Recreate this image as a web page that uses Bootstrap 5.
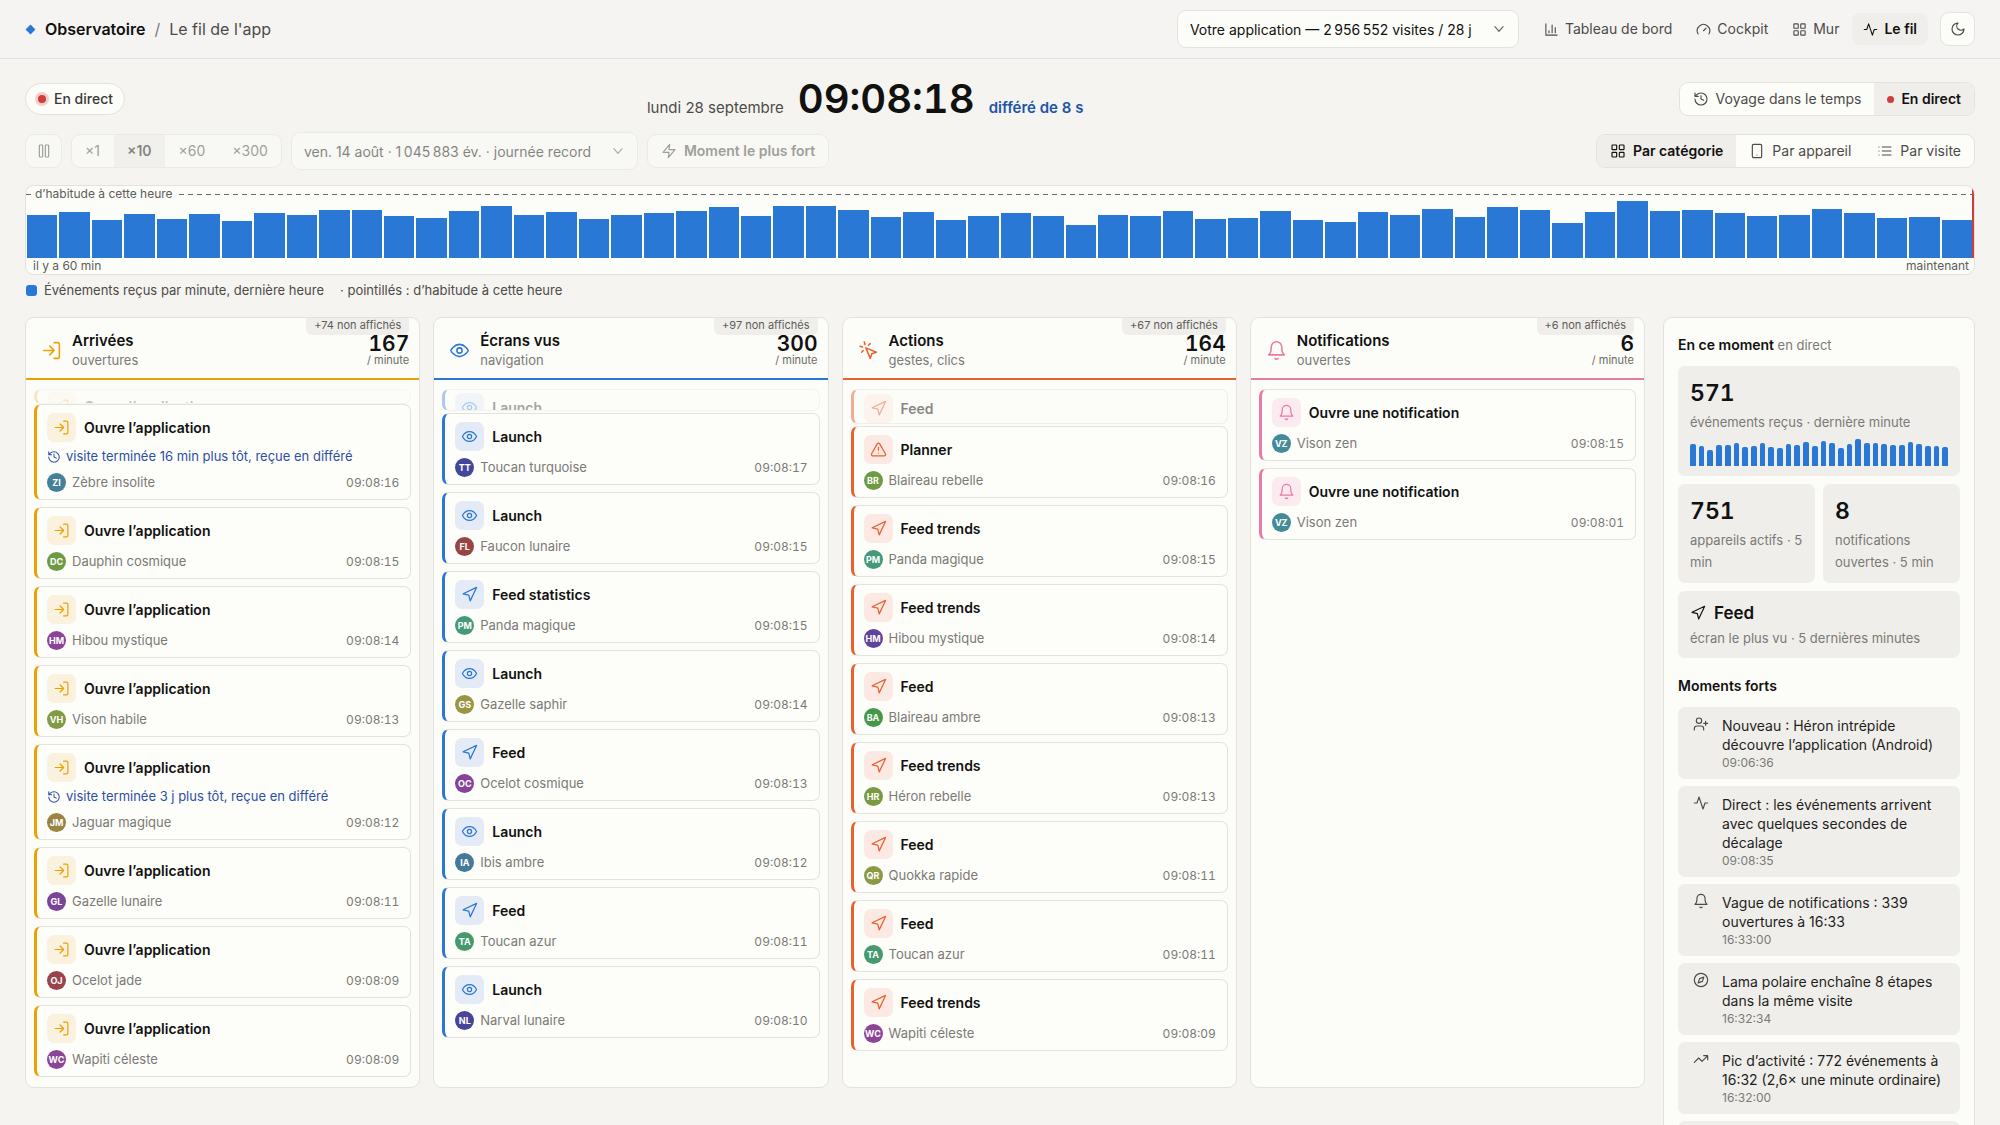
<!DOCTYPE html>
<html lang="fr">
<head>
<meta charset="utf-8">
<meta name="viewport" content="width=device-width, initial-scale=1">
<title>Observatoire / Le fil de l'app</title>
<link href="https://cdn.jsdelivr.net/npm/bootstrap@5.3.0/dist/css/bootstrap.min.css" rel="stylesheet">
<style>
:root{
  --page:#f5f4f0; --surface:#fcfcf9; --soft:#efeeeb; --line:#e3e2de;
  --ink:#111110; --ink2:#4c4b48; --ink3:#7b7a76; --blue:#2a78d6; --link:#1d54a8; --red:#d03b3b;
}
body{background:var(--page);color:var(--ink);font-family:Inter,"Liberation Sans",sans-serif;font-size:14px;line-height:20px}
.ic{width:16px;height:16px;flex:none;fill:none;stroke:currentColor;stroke-width:1.75;stroke-linecap:round;stroke-linejoin:round}
.ic-sm{width:14px;height:14px}
.ic-lg{width:21px;height:21px}
.num{font-variant-numeric:tabular-nums}
.gutter{padding-left:25px;padding-right:25px}

/* top bar */
.topbar{background:#f5f4f2;border-bottom:1px solid var(--line);height:59px}
.brand{font-size:16px;gap:9px}
.brand a{color:var(--ink);font-weight:600}
.brand-dot{width:7px;height:7px;margin:0 2px;background:var(--blue);transform:rotate(45deg)}
.brand-sep{color:var(--ink3)}
.brand-page{color:var(--ink2)}
.tabs{gap:2px;margin:0 12px 0 14px}
.tab-link{color:var(--ink2);padding:6px 11px;gap:6px;border-radius:8px}
.tab-link .ic{width:15px;height:15px}
.tab-link.active{background:var(--soft);color:var(--ink);font-weight:600}
.form-select.pick{
  --bs-form-select-bg-img:url("data:image/svg+xml,%3Csvg xmlns='http://www.w3.org/2000/svg' viewBox='0 0 24 24' fill='none' stroke='%23666' stroke-width='2' stroke-linecap='round' stroke-linejoin='round'%3E%3Cpath d='m5 8 7 8 7-8'/%3E%3C/svg%3E");
  height:38px;padding:0 32px 0 12px;color:var(--ink);background-color:var(--surface);border:1px solid var(--line);border-radius:9px;font-size:14px;background-size:14px 14px;background-position:right 12px center}
.pick:disabled{opacity:.5}
.form-select.pick-app{width:342px}
.form-select.pick-day{width:347px}
.box-btn{height:34px;padding:0 13px;gap:7px;background:var(--surface);border:1px solid var(--line);border-radius:9px;font-size:14px;line-height:20px;color:var(--ink2);font-weight:600}
.box-btn.square{width:35px;padding:0}
.box-btn.square:disabled{width:37px}
.box-btn:disabled{opacity:.5;background:var(--surface);border-color:var(--line);color:var(--ink2)}

/* control rows */
.clock-row{padding-top:17px;height:63px}
.tool-row{margin-top:10px;height:38px;gap:9px}
.live-pill{height:32px;padding:0 11px;gap:8px;background:var(--surface);border:1px solid var(--line);border-radius:16px;font-weight:500;color:#3a3936}
.live-dot{width:7px;height:7px;border-radius:50%;background:var(--red)}
.live-pill .live-dot{width:8px;height:8px;box-shadow:0 0 0 3px #f3cfcc;margin-left:1px}
.clock-group{gap:14px}
.clock{font-size:40px;line-height:44px;font-weight:600}
.clock-day{font-size:15px;color:var(--ink2)}
.clock-lag{font-size:15px;color:var(--link);font-weight:600;min-width:168px}
.seg{height:34px;background:var(--surface);border:1px solid var(--line);border-radius:9px;overflow:hidden}
.seg .btn{border:0;border-radius:0;padding:0 13px;gap:7px;font-size:14px;line-height:20px;color:var(--ink2)}
.seg .btn.active{background:var(--soft);color:var(--ink);font-weight:600}
.seg.off{opacity:.5;gap:1px}
.seg.off .btn:disabled{opacity:1}

/* minute chart */
.flow{margin-top:15px;background:var(--surface);border:1px solid var(--line);border-radius:9px;overflow:hidden;font-size:12px;line-height:16px;color:#5e5d5a}
.flow-plot{height:72px;gap:2px;padding:0 0 0 1px;border-right:2px solid var(--red)}
.flow-bar{flex:1 1 0;background:var(--blue)}
.flow-usual{top:8px;left:0;right:0;height:1px;background:repeating-linear-gradient(90deg,#6b6a67 0 5px,transparent 5px 9px)}
.flow-tag{top:0;left:6px;padding:0 3px;background:var(--surface)}
.flow-axis{padding:0 5px 0 7px}
.legend-row{margin-top:6px;padding-left:1px;font-size:13px;line-height:18px;color:var(--ink2)}
.legend-key{width:11px;height:11px;margin-right:7px;border-radius:3px;background:var(--blue)}

/* columns */
.board{gap:18px;margin-top:18px}
.lanes{gap:13px}
.lane{flex:1 1 0;min-width:0;background:var(--surface);border:1px solid var(--line);border-radius:9px;overflow:hidden}
.lane-head{height:62px;padding:5px 10px 0 15px;gap:10px;border-bottom:2px solid var(--tone)}
.lane-head .ic{color:var(--tone)}
.lane-title{font-size:15px;line-height:20px;font-weight:600;margin:0}
.sub{font-size:13px;line-height:19px;color:var(--ink3)}
.lane-count{font-size:21px;line-height:18px;padding-top:2px;font-weight:600}
.lane-unit{font-size:11px;line-height:15px;color:#6b6a67}
.lane-more{top:0;right:10px;height:17px;padding:0 8px;background:var(--soft);border-radius:0 0 6px 6px;font-size:11px;line-height:15px;color:#5e5d5a}
.lane-body{padding:9px 8px 10px}
.tone-gold{--tone:#eda100;--tint:#fbf1df}
.tone-blue{--tone:#2a78d6;--tint:#e4ebf7}
.tone-orange{--tone:#e8622f;--tint:#fce9e4}
.tone-pink{--tone:#e87ba4;--tint:#fbebf0}
.event{background:#fdfdfa;border:1px solid var(--line);border-left:3px solid var(--tone);border-radius:7px;padding:8px 11px 7px 10px;margin-bottom:7px;overflow:hidden}
.event:last-child{margin-bottom:0}
.event-top{gap:8px}
.event-icon{width:29px;height:29px;border-radius:7px;background:var(--tint);color:var(--tone)}
.event-icon .ic{width:17px;height:17px}
.event-title{line-height:20px;font-weight:600}
.event-late{margin-top:5px;font-size:13px;line-height:19px;color:#2d4fa3;gap:5px}
.event-meta{margin-top:7px;height:19px;font-size:13px;line-height:19px;color:var(--ink3);gap:6px}
.event-meta time{font-size:12px}
.face{width:19px;height:19px;border-radius:50%;color:#fff;font-size:9px;line-height:19px;font-weight:700}

/* side panel */
.side{flex:0 0 312px;background:var(--surface);border:1px solid var(--line);border-radius:9px;padding:17px 14px}
.side h2{font-size:14px;line-height:20px;font-weight:600;margin:0 0 11px}
.side .moments-title{margin-top:18px}
.tile{background:var(--soft);border-radius:7px;padding:13px 12px 10px}
.tile-num{font-size:23px;line-height:28px;font-weight:600;margin-bottom:4px}
.tile-text{font-size:13px;line-height:22px;color:var(--ink3)}
.tile-top{padding:11px 12px 9px}
.tile-name{gap:8px;font-size:17px;line-height:22px;font-weight:600;margin-bottom:3px}
.spark{height:28px;gap:3px;margin-top:5px}
.spark-bar{flex:1 1 0;background:var(--blue);border-radius:2px 2px 0 0}
.moments{gap:7px}
.moment{background:var(--soft);border-radius:7px;padding:9px 12px 8px 15px;gap:13px;font-size:14px;line-height:19px;color:#1f1e1c}
.moment .ic{color:var(--ink2)}
.moment time{font-size:12px;line-height:17px;color:var(--ink3)}
</style>
</head>
<body class="vh-100 overflow-hidden">
<svg class="d-none" aria-hidden="true">
  <symbol id="login" viewBox="0 0 24 24"><path d="M15 3h4a2 2 0 0 1 2 2v14a2 2 0 0 1-2 2h-4M10 17l5-5-5-5M15 12H3"/></symbol>
  <symbol id="eye" viewBox="0 0 24 24"><path d="M2 12s3.500-7 10-7 10 7 10 7-3.500 7-10 7-10-7-10-7Z"/><circle cx="12" cy="12" r="3"/></symbol>
  <symbol id="click" viewBox="0 0 24 24"><path d="m9 9 5 12 1.800-5.200L21 14ZM7.200 2.200 8 5.100M5.100 8l-2.900-.8M14 4.100 12 6M6 12l-1.900 2"/></symbol>
  <symbol id="bell" viewBox="0 0 24 24"><path d="M6 8a6 6 0 0 1 12 0c0 7 3 9 3 9H3s3-2 3-9M10.300 21a1.940 1.940 0 0 0 3.400 0"/></symbol>
  <symbol id="nav" viewBox="0 0 24 24"><path d="m3 11 19-9-9 19-2-8-8-2z"/></symbol>
  <symbol id="warn" viewBox="0 0 24 24"><path d="m21.730 18-8-14a2 2 0 0 0-3.480 0l-8 14A2 2 0 0 0 4 21h16a2 2 0 0 0 1.730-3ZM12 9v4M12 17h.01"/></symbol>
  <symbol id="history" viewBox="0 0 24 24"><path d="M3 12a9 9 0 1 0 9-9 9.750 9.750 0 0 0-6.740 2.740L3 8M3 3v5h5M12 7v5l4 2"/></symbol>
  <symbol id="user" viewBox="0 0 24 24"><path d="M16 21v-2a4 4 0 0 0-4-4H6a4 4 0 0 0-4 4v2M19 8v6M22 11h-6"/><circle cx="9" cy="7" r="4"/></symbol>
  <symbol id="activity" viewBox="0 0 24 24"><path d="M22 12h-4l-3 9L9 3l-3 9H2"/></symbol>
  <symbol id="compass" viewBox="0 0 24 24"><circle cx="12" cy="12" r="10"/><path d="m16.240 7.760-2.120 6.360-6.360 2.120 2.120-6.360 6.360-2.120z"/></symbol>
  <symbol id="trend" viewBox="0 0 24 24"><path d="m22 7-8.500 8.500-5-5L2 17M16 7h6v6"/></symbol>
  <symbol id="grid" viewBox="0 0 24 24"><rect x="3" y="3" width="7" height="7" rx="1"/><rect x="14" y="3" width="7" height="7" rx="1"/><rect x="14" y="14" width="7" height="7" rx="1"/><rect x="3" y="14" width="7" height="7" rx="1"/></symbol>
  <symbol id="phone" viewBox="0 0 24 24"><rect x="5" y="2" width="14" height="20" rx="2"/><path d="M12 18h.01"/></symbol>
  <symbol id="list" viewBox="0 0 24 24"><path d="M8 6h13M8 12h13M8 18h13M3 6h.01M3 12h.01M3 18h.01"/></symbol>
  <symbol id="gauge" viewBox="0 0 24 24"><path d="m12 14 4-4M3.340 19a10 10 0 1 1 17.320 0"/></symbol>
  <symbol id="chart" viewBox="0 0 24 24"><path d="M3 3v18h18M18 17V9M13 17V5M8 17v-3"/></symbol>
  <symbol id="moon" viewBox="0 0 24 24"><path d="M12 3a6 6 0 0 0 9 9 9 9 0 1 1-9-9Z"/></symbol>
  <symbol id="zap" viewBox="0 0 24 24"><path d="M13 2 3 14h9l-1 8 10-12h-9l1-8z"/></symbol>
  <symbol id="pause" viewBox="0 0 24 24"><rect x="5" y="3" width="5" height="18" rx="1"/><rect x="14" y="3" width="5" height="18" rx="1"/></symbol>
</svg>

<header class="topbar gutter d-flex align-items-center">
  <div class="brand d-flex align-items-center me-auto">
    <span class="brand-dot"></span>
    <a href="#" class="text-decoration-none">Observatoire</a>
    <span class="brand-sep">/</span>
    <span class="brand-page">Le fil de l'app</span>
  </div>
  <select class="form-select pick pick-app" aria-label="Application"><option>Votre application — 2&#8239;956&#8239;552 visites / 28 j</option></select>
  <nav class="tabs d-flex" aria-label="Pages">
    <a href="#" class="tab-link d-flex align-items-center text-decoration-none"><svg class="ic"><use href="#chart"/></svg>Tableau de bord</a>
    <a href="#" class="tab-link d-flex align-items-center text-decoration-none"><svg class="ic"><use href="#gauge"/></svg>Cockpit</a>
    <a href="#" class="tab-link d-flex align-items-center text-decoration-none"><svg class="ic"><use href="#grid"/></svg>Mur</a>
    <a href="#" class="tab-link active d-flex align-items-center text-decoration-none" aria-current="page"><svg class="ic"><use href="#activity"/></svg>Le fil</a>
  </nav>
  <button type="button" class="btn box-btn square d-flex align-items-center justify-content-center" aria-label="Thème sombre"><svg class="ic"><use href="#moon"/></svg></button>
</header>

<main class="gutter">
  <div class="clock-row d-flex align-items-center justify-content-between">
    <div class="live-pill d-flex align-items-center"><span class="live-dot"></span>En direct</div>
    <div class="clock-group d-flex align-items-baseline">
      <span class="clock-day">lundi 28 septembre</span>
      <time class="clock num">09:08:18</time>
      <span class="clock-lag">différé de 8 s</span>
    </div>
    <div class="seg d-flex" role="group" aria-label="Mode">
      <button type="button" class="btn d-flex align-items-center"><svg class="ic"><use href="#history"/></svg>Voyage dans le temps</button>
      <button type="button" class="btn active d-flex align-items-center"><span class="live-dot"></span>En direct</button>
    </div>
  </div>

  <div class="tool-row d-flex align-items-center">
    <button type="button" class="btn box-btn square d-flex align-items-center justify-content-center" aria-label="Pause" disabled><svg class="ic"><use href="#pause"/></svg></button>
    <div class="seg off d-flex" role="group" aria-label="Vitesse">
      <button type="button" class="btn" disabled>×1</button>
      <button type="button" class="btn active" disabled>×10</button>
      <button type="button" class="btn" disabled>×60</button>
      <button type="button" class="btn" disabled>×300</button>
    </div>
    <select class="form-select pick pick-day" aria-label="Journée" disabled><option>ven. 14 août · 1&#8239;045&#8239;883 év. · journée record</option></select>
    <button type="button" class="btn box-btn d-flex align-items-center" disabled><svg class="ic"><use href="#zap"/></svg>Moment le plus fort</button>
    <div class="seg d-flex ms-auto" role="group" aria-label="Affichage">
      <button type="button" class="btn active d-flex align-items-center"><svg class="ic"><use href="#grid"/></svg>Par catégorie</button>
      <button type="button" class="btn d-flex align-items-center"><svg class="ic"><use href="#phone"/></svg>Par appareil</button>
      <button type="button" class="btn d-flex align-items-center"><svg class="ic"><use href="#list"/></svg>Par visite</button>
    </div>
  </div>

  <section class="flow position-relative" aria-label="Événements par minute">
    <div class="flow-plot d-flex align-items-end" id="plot"></div>
    <div class="flow-usual position-absolute"></div>
    <span class="flow-tag position-absolute">d’habitude à cette heure</span>
    <div class="flow-axis d-flex justify-content-between"><span>il y a 60 min</span><span>maintenant</span></div>
  </section>
  <div class="legend-row d-flex align-items-center">
    <span class="legend-key"></span><span>Événements reçus par minute, dernière heure</span>
    <span class="ms-3">· pointillés : d’habitude à cette heure</span>
  </div>

  <div class="board d-flex align-items-start">
    <div class="lanes d-flex flex-grow-1" id="lanes"></div>
    <aside class="side">
      <h2>En ce moment <span class="sub fw-normal">en direct</span></h2>
      <div class="tile">
        <div class="tile-num num">571</div>
        <div class="tile-text">événements reçus · dernière minute</div>
        <div class="spark d-flex align-items-end" id="spark"></div>
      </div>
      <div class="d-flex mt-2 gap-2">
        <div class="tile w-50"><div class="tile-num num">751</div><div class="tile-text">appareils actifs · 5 min</div></div>
        <div class="tile w-50"><div class="tile-num num">8</div><div class="tile-text">notifications ouvertes · 5 min</div></div>
      </div>
      <div class="tile tile-top mt-2">
        <div class="tile-name d-flex align-items-center"><svg class="ic"><use href="#nav"/></svg>Feed</div>
        <div class="tile-text">écran le plus vu · 5 dernières minutes</div>
      </div>
      <h2 class="moments-title">Moments forts</h2>
      <div class="moments d-flex flex-column" id="moments"></div>
    </aside>
  </div>
</main>

<script src="https://cdn.jsdelivr.net/npm/bootstrap@5.3.0/dist/js/bootstrap.bundle.min.js"></script>
<script>
const icon = (name, size = '') => `<svg class="ic ${size}"><use href="#${name}"/></svg>`;
const perMinute = [128,137,113,131,116,133,112,134,128,145,145,127,121,142,155,128,137,118,130,135,142,152,127,157,155,145,122,139,115,125,136,125,98,130,127,140,116,121,140,113,109,137,130,146,124,154,145,106,137,171,141,143,136,127,130,147,136,121,122,115];
const perTick = [22,20,16,21,21,23,19,20,23,19,18,22,21,24,20,25,23,18,22,27,23,23,22,21,21,24,22,20,20,19];
const bars = (values, max, cls) => values.map(v => `<div class="${cls}" style="height:${(v / max * 100).toFixed(1)}%"></div>`).join('');
plot.innerHTML = bars(perMinute, 216, 'flow-bar');
spark.innerHTML = bars(perTick, 28, 'spark-bar');

const openApp = 'Ouvre l’application', notif = 'Ouvre une notification';
// event: [icon, title, initials, colour, name, time, late note]; entering: [icon, title, height, top padding, gap, opacity]
const data = [
  {tone:'gold', icon:'login', title:'Arrivées', sub:'ouvertures', count:167, more:74, entering:['login',openApp,15,2,0,.25], events:[
    ['login',openApp,'ZI','#44809a','Zèbre insolite','09:08:16','visite terminée 16 min plus tôt, reçue en différé'],
    ['login',openApp,'DC','#6f9a44','Dauphin cosmique','09:08:15'],
    ['login',openApp,'HM','#8c4499','Hibou mystique','09:08:14'],
    ['login',openApp,'VH','#839a44','Vison habile','09:08:13'],
    ['login',openApp,'JM','#9a8444','Jaguar magique','09:08:12','visite terminée 3 j plus tôt, reçue en différé'],
    ['login',openApp,'GL','#7a4499','Gazelle lunaire','09:08:11'],
    ['login',openApp,'OJ','#99444a','Ocelot jade','09:08:09'],
    ['login',openApp,'WC','#8c4499','Wapiti céleste','09:08:09']]},
  {tone:'blue', icon:'eye', title:'Écrans vus', sub:'navigation', count:300, more:97, entering:['eye','Launch',22,3,2,.38], events:[
    ['eye','Launch','TT','#444799','Toucan turquoise','09:08:17'],
    ['eye','Launch','FL','#994444','Faucon lunaire','09:08:15'],
    ['nav','Feed statistics','PM','#44997a','Panda magique','09:08:15'],
    ['eye','Launch','GS','#999544','Gazelle saphir','09:08:14'],
    ['nav','Feed','OC','#854499','Ocelot cosmique','09:08:13'],
    ['eye','Launch','IA','#447a99','Ibis ambre','09:08:12'],
    ['nav','Feed','TA','#44996f','Toucan azur','09:08:11'],
    ['eye','Launch','NL','#4a4499','Narval lunaire','09:08:10']]},
  {tone:'orange', icon:'click', title:'Actions', sub:'gestes, clics', count:164, more:67, entering:['nav','Feed',35,4,2,.5], events:[
    ['warn','Planner','BR','#6f9a44','Blaireau rebelle','09:08:16'],
    ['nav','Feed trends','PM','#44997a','Panda magique','09:08:15'],
    ['nav','Feed trends','HM','#604499','Hibou mystique','09:08:14'],
    ['nav','Feed','BA','#449949','Blaireau ambre','09:08:13'],
    ['nav','Feed trends','HR','#7a9944','Héron rebelle','09:08:13'],
    ['nav','Feed','QR','#8a9944','Quokka rapide','09:08:11'],
    ['nav','Feed','TA','#44996f','Toucan azur','09:08:11'],
    ['nav','Feed trends','WC','#8c4499','Wapiti céleste','09:08:09']]},
  {tone:'pink', icon:'bell', title:'Notifications', sub:'ouvertes', count:6, more:6, events:[
    ['bell',notif,'VZ','#448a99','Vison zen','09:08:15'],
    ['bell',notif,'VZ','#448a99','Vison zen','09:08:01']]}
];
const head = (i, t) => `<div class="event-top d-flex align-items-center"><span class="event-icon d-flex align-items-center justify-content-center">${icon(i)}</span><span class="event-title">${t}</span></div>`;
const eventCard = ([i, t, ini, col, name, time, late]) => `<article class="event">${head(i, t)}
  ${late ? `<div class="event-late d-flex align-items-center">${icon('history', 'ic-sm')}${late}</div>` : ''}
  <div class="event-meta d-flex align-items-center"><span class="face text-center" style="background:${col}">${ini}</span>${name}<time class="ms-auto num">${time}</time></div></article>`;
const enteringCard = ([i, t, h, pad, gap, o]) => `<article class="event" style="height:${h}px;padding-top:${pad}px;padding-bottom:0;margin-bottom:${gap}px;opacity:${o}">${head(i, t)}</article>`;
lanes.innerHTML = data.map(l => `<section class="lane tone-${l.tone}">
  <header class="lane-head position-relative d-flex align-items-center">${icon(l.icon, 'ic-lg')}
    <div class="me-auto"><h2 class="lane-title">${l.title}</h2><div class="sub">${l.sub}</div></div>
    <div class="text-end"><div class="lane-count num">${l.count}</div><div class="lane-unit">/ minute</div></div>
    <span class="lane-more position-absolute">+${l.more} non affichés</span>
  </header>
  <div class="lane-body">${l.entering ? enteringCard(l.entering) : ''}${l.events.map(eventCard).join('')}</div></section>`).join('');

moments.innerHTML = [
  ['user','Nouveau : Héron intrépide découvre l’application (Android)','09:06:36'],
  ['activity','Direct : les événements arrivent avec quelques secondes de décalage','09:08:35'],
  ['bell','Vague de notifications : 339 ouvertures à 16:33','16:33:00'],
  ['compass','Lama polaire enchaîne 8 étapes dans la même visite','16:32:34'],
  ['trend','Pic d’activité : 772 événements à 16:32 (2,6× une minute ordinaire)','16:32:00'],
  ['activity','','']
].map(([i, t, h]) => `<div class="moment d-flex">${icon(i)}<div>${t}<time class="d-block">${h}</time></div></div>`).join('');
</script>
</body>
</html>
